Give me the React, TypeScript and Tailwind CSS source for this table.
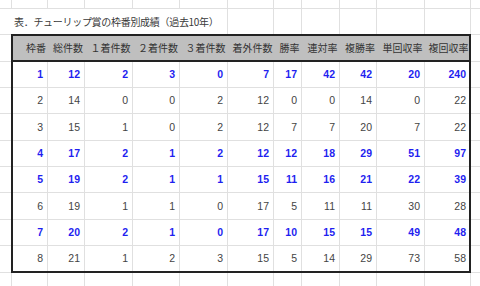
const GRID = "border-[#e0e0e0]";

// sheet column widths (line included) for rows outside the table
const sheetCols = [
  "w-[12px]", "w-[36px]", "w-[37px]", "w-[48px]", "w-[47px]", "w-[48px]",
  "w-[46px]", "w-[28px]", "w-[38px]", "w-[37px]", "w-[48px]", "w-[46px]",
];

// table column widths (inside the thick border)
const tableCols = [
  "w-[35px]", "w-[37px]", "w-[48px]", "w-[47px]", "w-[48px]", "w-[46px]",
  "w-[28px]", "w-[38px]", "w-[37px]", "w-[48px]", "w-[44px]",
];

const headers = [
  "枠番", "総件数", "１着件数", "２着件数", "３着件数", "着外件数",
  "勝率", "連対率", "複勝率", "単回収率", "複回収率",
];

const rows: { hi: boolean; v: number[] }[] = [
  { hi: true, v: [1, 12, 2, 3, 0, 7, 17, 42, 42, 20, 240] },
  { hi: false, v: [2, 14, 0, 0, 2, 12, 0, 0, 14, 0, 22] },
  { hi: false, v: [3, 15, 1, 0, 2, 12, 7, 7, 20, 7, 22] },
  { hi: true, v: [4, 17, 2, 1, 2, 12, 12, 18, 29, 51, 97] },
  { hi: true, v: [5, 19, 2, 1, 1, 15, 11, 16, 21, 22, 39] },
  { hi: false, v: [6, 19, 1, 1, 0, 17, 5, 11, 11, 30, 28] },
  { hi: true, v: [7, 20, 2, 1, 0, 17, 10, 15, 15, 49, 48] },
  { hi: false, v: [8, 21, 1, 2, 3, 15, 5, 14, 29, 73, 58] },
];

// row heights in px, bottom gridline included (last one has none)
const rowH = ["h-[26px]", "h-[26px]", "h-[27px]", "h-[26px]", "h-[26px]", "h-[27px]", "h-[26px]", "h-[25px]"];
// side cells next to the table, aligned with the rows above
const sideH = ["h-[26px]", "h-[26px]", "h-[27px]", "h-[26px]", "h-[26px]", "h-[27px]", "h-[26px]", "h-[27px]"];

function SheetRow({ height }: { height: string }) {
  return (
    <div className={`flex ${height}`}>
      {sheetCols.map((w, i) => (
        <div key={i} className={`${w} shrink-0 border-r border-b ${GRID}`} />
      ))}
      <div className={`flex-1 border-b ${GRID}`} />
    </div>
  );
}

function SideColumn({ width }: { width: string }) {
  return (
    <div className={`${width} shrink-0 flex flex-col`}>
      <div className={`h-[28px] border-t border-b ${GRID}`} />
      {sideH.map((h, i) => (
        <div key={i} className={`${h} border-b ${GRID}`} />
      ))}
    </div>
  );
}

export default function App() {
  return (
    <div className="w-[480px] h-[286px] overflow-hidden bg-white font-['Noto_Sans_CJK_JP',sans-serif] text-[#3a3a3a]">
      <SheetRow height="h-[9px]" />

      {/* Title row: text overflows over the first columns */}
      <div className="flex h-[25px]">
        <div className={`w-[228px] shrink-0 border-r ${GRID} flex items-center pl-[14px] text-[10px] whitespace-nowrap tracking-[-0.3px]`}>
          表．チューリップ賞の枠番別成績（過去10年）
        </div>
        {sheetCols.slice(6).map((w, i) => (
          <div key={i} className={`${w} shrink-0 border-r ${GRID}`} />
        ))}
        <div className="flex-1" />
      </div>

      {/* Table band */}
      <div className="flex">
        <SideColumn width="w-[11px]" />

        <div className="w-[460px] shrink-0 border-2 border-[#222]">
          {/* Header */}
          <div className="flex h-[26px] bg-[#bfbfbf] border-b-2 border-[#222]">
            {headers.map((h, i) => (
              <div
                key={i}
                className={`${tableCols[i]} shrink-0 flex items-center justify-center whitespace-nowrap text-[10px] leading-none text-[#333] ${i === 0 ? "pl-[11px]" : "pl-[3px]"}`}
              >
                {h}
              </div>
            ))}
          </div>

          {/* Body */}
          {rows.map((r, ri) => (
            <div key={ri} className={`flex ${rowH[ri]} ${ri < rows.length - 1 ? `border-b ${GRID}` : ""}`}>
              {r.v.map((n, ci) => (
                <div
                  key={ci}
                  className={`${tableCols[ci]} shrink-0 flex items-center justify-end font-['Liberation_Sans',sans-serif] text-[10.5px] leading-none ${
                    ci < r.v.length - 1 ? `border-r ${GRID} pr-[4px]` : "pr-[3px]"
                  } ${r.hi ? "font-bold text-[#1f1ff0]" : "text-[#444]"}`}
                >
                  {n}
                </div>
              ))}
            </div>
          ))}
        </div>

        <div className="flex-1">
          <SideColumn width="w-full" />
        </div>
      </div>

      {/* Below the table */}
      <div className="flex h-[20px]">
        {sheetCols.map((w, i) => (
          <div key={i} className={`${w} shrink-0 border-r ${GRID}`} />
        ))}
        <div className="flex-1" />
      </div>
    </div>
  );
}
